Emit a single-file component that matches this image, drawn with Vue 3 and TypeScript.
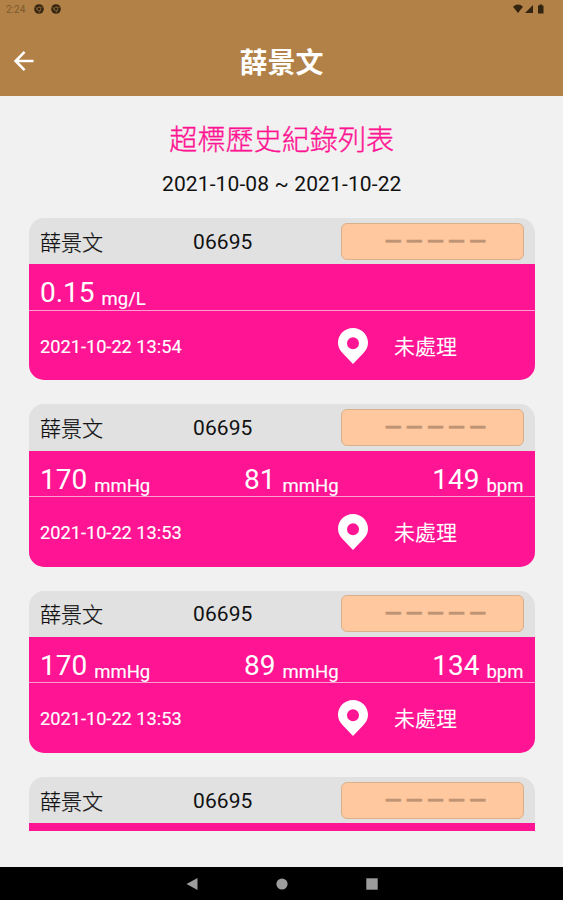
<script setup lang="ts">
interface Reading {
  value: string
  unit: string
}

interface HistoryRecord {
  id: number
  name: string
  code: string
  readings: Reading[]
  time: string
  status: string
}

const userName = '薛景文'

const records: HistoryRecord[] = [
  { id: 1, name: userName, code: '06695', readings: [{ value: '0.15', unit: 'mg/L' }], time: '2021-10-22 13:54', status: '未處理' },
  {
    id: 2,
    name: userName,
    code: '06695',
    readings: [
      { value: '170', unit: 'mmHg' },
      { value: '81', unit: 'mmHg' },
      { value: '149', unit: 'bpm' },
    ],
    time: '2021-10-22 13:53',
    status: '未處理',
  },
  {
    id: 3,
    name: userName,
    code: '06695',
    readings: [
      { value: '170', unit: 'mmHg' },
      { value: '89', unit: 'mmHg' },
      { value: '134', unit: 'bpm' },
    ],
    time: '2021-10-22 13:53',
    status: '未處理',
  },
  { id: 4, name: userName, code: '06695', readings: [], time: '', status: '' },
]
</script>

<template>
  <div class="screen">
    <header class="top">
      <div class="status-bar">
        <span class="clock">2:24</span>
        <svg v-for="n in 2" :key="n" class="notice" viewBox="0 0 10 10">
          <circle cx="5" cy="5" r="4.8" fill="#33240f" />
          <circle cx="5" cy="5" r="1.9" fill="none" stroke="#8e6738" stroke-width="0.9" />
          <path d="M5 3.1H9M3.3 6L1.5 2.8M6.6 6L4.8 9.3" stroke="#8e6738" stroke-width="0.7" />
        </svg>
        <span class="spacer"></span>
        <svg class="signals" viewBox="0 0 32 10">
          <path d="M0 2.8Q5-1.8 10 2.8L5 9Z" />
          <path d="M12 9H20V1Z" />
          <path d="M25 1.4H26.5V0.4H29V1.4H30.5V9.4H25Z" />
        </svg>
      </div>
      <div class="app-bar">
        <button class="back" type="button" aria-label="返回">
          <svg viewBox="0 0 20 20">
            <path d="M19.5 10H2M10.6 0.9L1.6 10L10.6 19.1" />
          </svg>
        </button>
        <h1>{{ userName }}</h1>
      </div>
    </header>

    <main class="content">
      <h2>超標歷史紀錄列表</h2>
      <p class="range">2021-10-08 ~ 2021-10-22</p>
      <div class="list">
        <article v-for="record in records" :key="record.id" class="card">
          <div class="card-head">
            <span class="name">{{ record.name }}</span>
            <span class="code">{{ record.code }}</span>
            <button class="action" type="button">－－－－－</button>
          </div>
          <div class="readings">
            <span v-for="(reading, i) in record.readings" :key="i" class="reading">
              <span class="value">{{ reading.value }}</span>
              <span class="unit">{{ reading.unit }}</span>
            </span>
          </div>
          <div class="card-foot">
            <span class="time">{{ record.time }}</span>
            <svg class="pin" viewBox="0 0 30 36">
              <path fill-rule="evenodd" d="M15 0C6.7 0 0 6.5 0 14.8C0 19.4 2 22.4 5.2 25.8L15 36L24.8 25.8C28 22.4 30 19.4 30 14.8C30 6.5 23.3 0 15 0ZM15 9.2A6 6 0 1 1 15 21.2A6 6 0 1 1 15 9.2Z" />
            </svg>
            <span class="state">{{ record.status }}</span>
          </div>
        </article>
      </div>
    </main>

    <nav class="nav-bar">
      <svg viewBox="0 0 12 12"><path d="M0.5 6L11.5 0V12Z" /></svg>
      <svg viewBox="0 0 12 12"><circle cx="6" cy="6" r="5.6" /></svg>
      <svg viewBox="0 0 12 12"><path d="M0.3 0.3H11.7V11.7H0.3Z" /></svg>
    </nav>
  </div>
</template>

<style>
body {
  margin: 0;
  background: #f1f1f1;
}
</style>

<style scoped>
.screen {
  width: 563px;
  height: 900px;
  display: flex;
  flex-direction: column;
  overflow: hidden;
  background: #f1f1f1;
  color: #111;
  font-family: Roboto, "Noto Sans CJK TC", sans-serif;
}

button {
  margin: 0;
  font-family: inherit;
}

.top {
  height: 95.5px;
  flex: none;
  background: #b28147;
}

.status-bar {
  height: 18px;
  display: flex;
  align-items: center;
  padding: 0 17px 0 6px;
  box-sizing: border-box;
}

.clock {
  width: 28px;
  font-size: 10px;
  color: #7d5a2e;
}

.notice {
  width: 10px;
  height: 10px;
  margin-right: 7px;
}

.spacer {
  flex: 1;
}

.signals {
  width: 32px;
  height: 10px;
  margin-right: 1px;
  fill: #33240f;
}

.app-bar {
  height: 86px;
  display: grid;
  grid-template-columns: 60px 1fr 60px;
  align-items: center;
}

.back {
  padding: 0 0 0 14px;
  border: 0;
  background: none;
  display: flex;
}

.back svg {
  width: 20px;
  height: 20px;
  fill: none;
  stroke: #fff;
  stroke-width: 2.5;
}

h1 {
  margin: 0;
  padding-top: 6px;
  text-align: center;
  color: #fff;
  font-size: 28px;
  line-height: 40px;
  font-weight: 700;
}

.content {
  flex: 1;
  min-height: 0;
  display: flex;
  flex-direction: column;
  padding: 25px 28px 36px 28.5px;
}

h2 {
  margin: 0;
  text-align: center;
  font-size: 28.1px;
  line-height: 40px;
  font-weight: 300;
  color: #ff1493;
  -webkit-text-stroke: 0.35px #ff1493;
}

.range {
  margin: 8px 0 19.5px;
  text-align: center;
  font-size: 21px;
  line-height: 30px;
  letter-spacing: 0.12px;
}

.list {
  flex: 1;
  min-height: 0;
  overflow: hidden;
  display: flex;
  flex-direction: column;
  gap: 24px;
}

.card {
  flex: none;
  height: 162.4px;
  display: flex;
  flex-direction: column;
  overflow: hidden;
  border-radius: 15px;
  color: #fff;
}

.card-head {
  height: 46.2px;
  flex: none;
  display: grid;
  grid-template-columns: 153px 148px 183px;
  align-items: center;
  padding-left: 11.5px;
  background: #e1e1e1;
  color: #111;
  font-size: 21px;
}

.name {
  padding-bottom: 1px;
  font-weight: 300;
  -webkit-text-stroke: 0.25px #111;
}

.code {
  letter-spacing: 0.1px;
  padding-top: 1px;
}

.action {
  height: 37px;
  padding: 0 0 0 6px;
  border: 1px solid #d9b08a;
  border-radius: 6px;
  background: #ffc89e;
  color: #bf9474;
  font-size: 21.1px;
  font-weight: 700;
  line-height: 35px;
  -webkit-text-stroke: 0.5px #bf9474;
}

.readings {
  height: 46.5px;
  flex: none;
  box-sizing: border-box;
  display: flex;
  justify-content: space-between;
  padding: 10px 11.5px 0;
  border-bottom: 1.4px solid #ff9fd0;
  background: #ff1493;
}

.reading {
  display: flex;
  gap: 7px;
}

.value {
  font-size: 28px;
  line-height: 38px;
}

.unit {
  padding-top: 6px;
  font-size: 18.5px;
  line-height: 38px;
  -webkit-text-stroke: 0.15px #fff;
}

.card-foot {
  flex: 1;
  display: grid;
  grid-template-columns: 298px 56px 1fr;
  align-items: center;
  padding-left: 11.5px;
  background: #ff1493;
}

.time {
  padding-top: 1px;
  font-size: 18.2px;
  -webkit-text-stroke: 0.15px #fff;
}

.pin {
  width: 30px;
  height: 36px;
  fill: #fff;
}

.state {
  padding-bottom: 2px;
  font-size: 21px;
  font-weight: 400;
}

.nav-bar {
  height: 33px;
  flex: none;
  display: flex;
  justify-content: center;
  align-items: center;
  gap: 78px;
  background: #000;
}

.nav-bar svg {
  width: 12px;
  height: 12px;
  fill: #9c9c9c;
}
</style>
